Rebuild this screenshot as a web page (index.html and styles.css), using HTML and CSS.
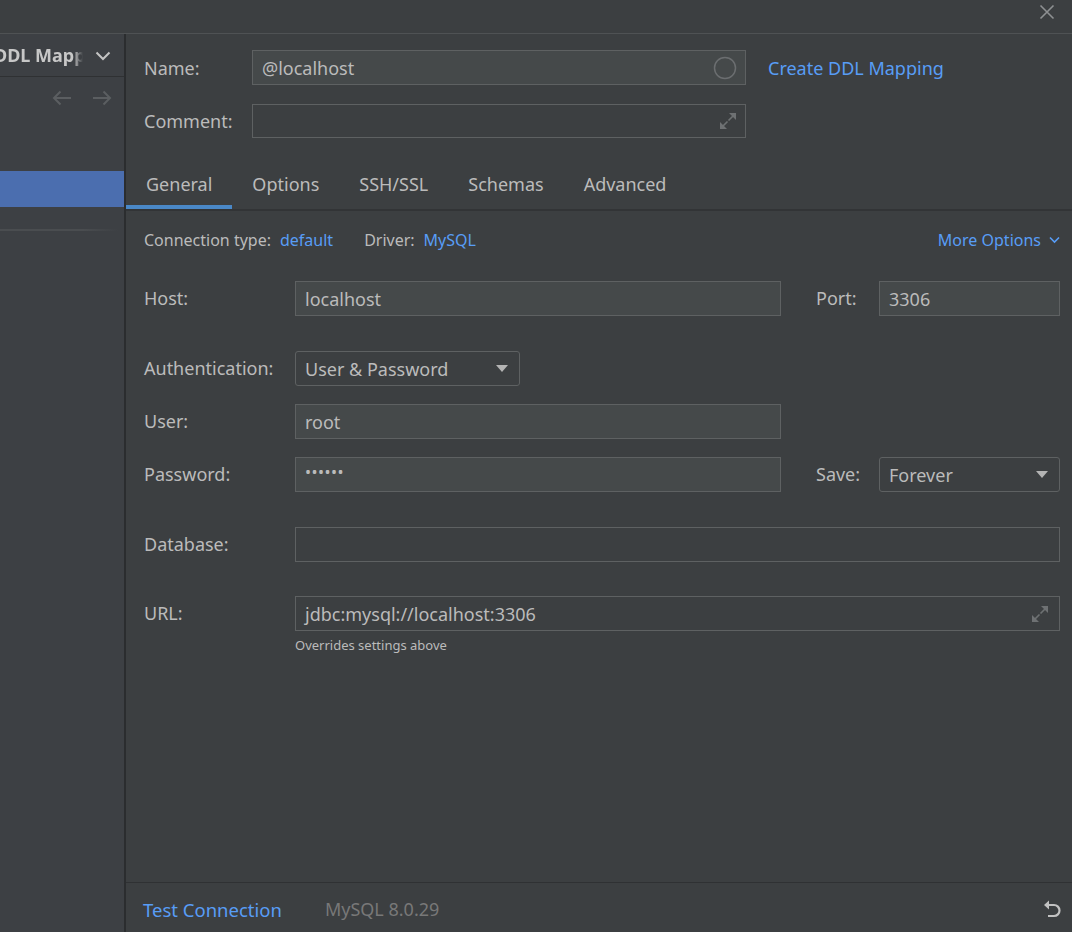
FILE: index.html
```html
<!DOCTYPE html>
<html>
<head>
<meta charset="utf-8">
<link rel="stylesheet" href="styles.css">
</head>
<body>
<div class="window">
  <div class="titlebar">
    <svg class="close" width="16" height="16" viewBox="0 0 16 16"><path d="M1.5 1.5 L14.5 14.5 M14.5 1.5 L1.5 14.5" stroke="#8e9092" stroke-width="1.6" fill="none"/></svg>
  </div>
  <div class="content">
    <aside class="sidebar">
      <div class="side-head">
        <div class="side-title"><span>DDL Mapping</span></div>
        <svg class="chev" width="16" height="10" viewBox="0 0 16 10"><path d="M1.5 1.5 L8 8 L14.5 1.5" stroke="#c4c4c4" stroke-width="2" fill="none"/></svg>
      </div>
      <div class="side-nav">
        <svg width="20" height="16" viewBox="0 0 20 16"><path d="M19 8 H2 M8.5 1.5 L2 8 L8.5 14.5" stroke="#5b5e61" stroke-width="2" fill="none"/></svg>
        <svg width="20" height="16" viewBox="0 0 20 16"><path d="M1 8 H18 M11.5 1.5 L18 8 L11.5 14.5" stroke="#5b5e61" stroke-width="2" fill="none"/></svg>
      </div>
      <div class="side-item selected"></div>
      <div class="side-sep"></div>
    </aside>
    <main class="main">
      <div class="top-form">
        <div class="top-row">
          <span class="label top-label">Name:</span>
          <div class="field light top-field">
            <span>@localhost</span>
            <svg width="24" height="24" viewBox="0 0 24 24"><circle cx="12" cy="12" r="10.5" stroke="#6b6e70" stroke-width="1.5" fill="none"/></svg>
          </div>
          <a class="link ddl-link">Create DDL Mapping</a>
        </div>
        <div class="top-row">
          <span class="label top-label">Comment:</span>
          <div class="field dark top-field comment">
            <span></span>
            <svg class="expand" width="18" height="18" viewBox="0 0 18 18"><path d="M9.5 8.5 L15 3 M8.5 9.5 L3 15" stroke="#6e7173" stroke-width="1.6" fill="none"/><polygon points="10,1 17,1 17,8" fill="#6e7173"/><polygon points="1,10 1,17 8,17" fill="#6e7173"/></svg>
          </div>
        </div>
      </div>

      <div class="tabs">
        <div class="tab active">General</div>
        <div class="tab">Options</div>
        <div class="tab">SSH/SSL</div>
        <div class="tab">Schemas</div>
        <div class="tab">Advanced</div>
      </div>

      <div class="conn-row">
        <div class="conn-left">
          <span class="label">Connection type:</span>
          <a class="link">default</a>
          <span class="label driver">Driver:</span>
          <a class="link">MySQL</a>
        </div>
        <div class="more">
          <a class="link">More Options</a>
          <svg width="11" height="8" viewBox="0 0 11 8"><path d="M1 1.5 L5.5 6 L10 1.5" stroke="#589df6" stroke-width="1.6" fill="none"/></svg>
        </div>
      </div>

      <div class="general">
        <div class="row">
          <span class="label col-label">Host:</span>
          <div class="field light w-main"><span>localhost</span></div>
          <span class="label side-label">Port:</span>
          <div class="field light w-side"><span>3306</span></div>
        </div>
        <div class="row group">
          <span class="label col-label">Authentication:</span>
          <div class="field dark dropdown w-auth"><span>User &amp; Password</span><i class="tri"></i></div>
        </div>
        <div class="row">
          <span class="label col-label">User:</span>
          <div class="field light w-main"><span>root</span></div>
        </div>
        <div class="row">
          <span class="label col-label">Password:</span>
          <div class="field light w-main"><span class="dots">••••••</span></div>
          <span class="label side-label">Save:</span>
          <div class="field dark dropdown w-side"><span>Forever</span><i class="tri"></i></div>
        </div>
        <div class="row group">
          <span class="label col-label">Database:</span>
          <div class="field dark w-full"><span></span></div>
        </div>
        <div class="row group url-row">
          <span class="label col-label">URL:</span>
          <div class="field dark w-full url">
            <span>jdbc:mysql://localhost:3306</span>
            <svg class="expand" width="18" height="18" viewBox="0 0 18 18"><path d="M9.5 8.5 L15 3 M8.5 9.5 L3 15" stroke="#6e7173" stroke-width="1.6" fill="none"/><polygon points="10,1 17,1 17,8" fill="#6e7173"/><polygon points="1,10 1,17 8,17" fill="#6e7173"/></svg>
          </div>
        </div>
        <div class="note">Overrides settings above</div>
      </div>

      <div class="spacer"></div>

      <footer class="footer">
        <a class="link">Test Connection</a>
        <span class="version">MySQL 8.0.29</span>
        <svg class="revert" width="20" height="22" viewBox="0 0 20 22"><path d="M4 7 H11 A5.5 5.5 0 0 1 11 18 H5" stroke="#c2c2c2" stroke-width="2.2" fill="none"/><polygon points="1,7 6,2.5 6,11.5" fill="#c2c2c2"/></svg>
      </footer>
    </main>
  </div>
</div>
</body>
</html>
```

FILE: styles.css
```css
* { box-sizing: border-box; }

html, body {
  margin: 0;
  padding: 0;
  background: #3c3f41;
}

body {
  width: 1072px;
  height: 932px;
  overflow: hidden;
  font-family: "Noto Sans", "Open Sans", sans-serif;
  color: #bbbbbb;
}

.window {
  display: flex;
  flex-direction: column;
  height: 932px;
}

.titlebar {
  height: 34px;
  flex: none;
  border-bottom: 1px solid #4f5254;
  display: flex;
  justify-content: flex-end;
  align-items: flex-start;
  padding: 4px 17px 0 0;
}

.content {
  flex: 1;
  display: flex;
  min-height: 0;
}

/* Sidebar */
.sidebar {
  width: 126px;
  flex: none;
  background: #3d4044;
  border-right: 2px solid #2b2d2f;
  display: flex;
  flex-direction: column;
}

.side-head {
  height: 43px;
  border-bottom: 1px solid #2f3133;
  display: flex;
  align-items: center;
  justify-content: space-between;
  padding-right: 13px;
}

.side-title {
  width: 83px;
  overflow: hidden;
  white-space: nowrap;
  -webkit-mask-image: linear-gradient(to right, #000 88%, transparent 100%);
  mask-image: linear-gradient(to right, #000 88%, transparent 100%);
}

.side-title span {
  display: inline-block;
  margin-left: -6px;
  font-weight: 700;
  font-size: 18px;
  color: #c7c7c7;
}

.chev { margin-top: 2px; }

.side-nav {
  height: 42px;
  display: flex;
  align-items: center;
  justify-content: flex-end;
  gap: 20px;
  padding-right: 12px;
}

.side-item {
  height: 36px;
  margin-top: 52px;
}

.side-item.selected {
  background: #4b6eaf;
}

.side-sep {
  margin-top: 22px;
  height: 2px;
  width: 118px;
  background: linear-gradient(to right, #4a4d50 0%, #4a4d50 70%, rgba(74, 77, 80, 0) 100%);
}

/* Main */
.main {
  flex: 1;
  display: flex;
  flex-direction: column;
  min-width: 0;
}

.label {
  font-size: 18px;
  color: #bbbbbb;
  white-space: nowrap;
}

.link {
  color: #589df6;
  white-space: nowrap;
}

.field {
  height: 35px;
  border: 1px solid #5e6162;
  display: flex;
  align-items: center;
  justify-content: space-between;
  padding: 0 9px;
  font-size: 18px;
  color: #bbbbbb;
  white-space: nowrap;
}

.field.light { background: #45494a; }
.field.dark { background: #3c3f41; }

.top-form {
  padding: 16px 0 0 18px;
  display: flex;
  flex-direction: column;
  gap: 18px;
}

.top-row {
  display: flex;
  align-items: center;
  height: 35px;
}

.top-label { width: 108px; }

.top-field {
  width: 494px;
  padding-right: 8px;
}

.top-field.comment { height: 34px; }

.ddl-link {
  margin-left: 22px;
  font-size: 18px;
}

.tabs {
  margin-top: 25px;
  display: flex;
  border-bottom: 2px solid #323436;
}

.tab {
  height: 46px;
  padding: 0 20px;
  line-height: 42px;
  font-size: 18px;
  color: #bbbbbb;
  border-bottom: 4px solid transparent;
}

.tab.active {
  border-bottom-color: #4a88c7;
}

.conn-row {
  height: 42px;
  margin-top: 8px;
  display: flex;
  align-items: center;
  justify-content: space-between;
  padding: 0 12px 0 18px;
}

.conn-left {
  display: flex;
  align-items: center;
  gap: 9px;
}

.conn-row .label, .conn-row .link {
  font-size: 16px;
}

.conn-left .driver { margin-left: 22px; }

.more {
  display: flex;
  align-items: center;
  gap: 7px;
}

.more .link { margin-right: 1px; }

.general {
  margin-top: 20px;
  padding-left: 18px;
  display: flex;
  flex-direction: column;
}

.row {
  display: flex;
  align-items: center;
  height: 35px;
  margin-top: 18px;
}

.row:first-child { margin-top: 0; }
.row.group { margin-top: 35px; }
.row.url-row { margin-top: 34px; }

.row .label { margin-top: -1px; }

.col-label { width: 151px; flex: none; }

.w-main { width: 486px; }
.w-auth { width: 225px; }
.w-side { width: 181px; }
.w-full { width: 765px; }

.side-label {
  width: 98px;
  padding-left: 35px;
}

.dropdown {
  border-radius: 3px;
  padding-right: 11px;
}

.tri {
  width: 0;
  height: 0;
  border-left: 6px solid transparent;
  border-right: 6px solid transparent;
  border-top: 7px solid #b4b4b4;
}

.dots {
  font-size: 16px;
  letter-spacing: 0.5px;
  margin-top: -6px;
}

.url { padding-right: 10px; }

.note {
  margin-top: 5px;
  padding-left: 151px;
  font-size: 13px;
  color: #bbbbbb;
}

.spacer { flex: 1; }

.footer {
  height: 50px;
  flex: none;
  border-top: 1px solid #2f3133;
  display: flex;
  align-items: center;
  padding: 3px 9px 0 17px;
  font-size: 18px;
}

.footer .link { font-size: 18.5px; }

.footer .version {
  margin-left: 43px;
  color: #787878;
}

.revert { margin-left: auto; }
```
